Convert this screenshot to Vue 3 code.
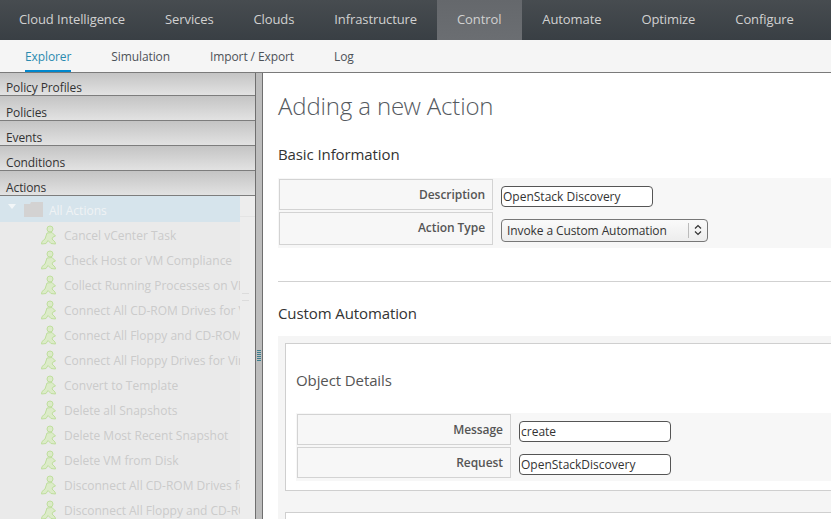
<template>
  <div class="page">
    <nav class="topnav">
      <a
        v-for="item in mainMenu"
        :key="item"
        class="topnav-item"
        :class="{ active: item === 'Control' }"
      >{{ item }}</a>
    </nav>
    <nav class="subnav">
      <a
        v-for="item in subMenu"
        :key="item"
        class="subnav-item"
        :class="{ active: item === 'Explorer' }"
      >{{ item }}</a>
    </nav>

    <div class="workspace">
      <aside class="sidebar">
        <div v-for="head in accordion" :key="head" class="accordion-head">{{ head }}</div>
        <div class="tree-wrap">
          <div class="tree">
            <div class="tree-root">
              <span class="caret"></span>
              <svg class="folder" width="19" height="15" viewBox="0 0 19 15">
                <path d="M0 2 H6 L7 0 H19 V15 H0 Z" fill="#d3d2d2" />
              </svg>
              <span class="root-label">All Actions</span>
            </div>
            <div v-for="action in actions" :key="action" class="tree-row">
              <svg class="runner" width="18" height="20" viewBox="0 0 18 20">
                <circle cx="10" cy="4" r="3" fill="#dcebc9" stroke="#bfdf9d" />
                <path
                  d="M7 8 L12 7.5 L15.5 11 L13 12 L12 14 L15 17 L15.5 19 L11 18.5 L8 15.5 L6 18.5 L1.5 19 L2 16.5 L5 14 Z"
                  fill="#dcebc9"
                  stroke="#bfdf9d"
                  stroke-width="1"
                />
              </svg>
              <span class="row-label">{{ action }}</span>
            </div>
          </div>
          <div class="tree-scroll">
            <span class="scroll-cap"></span>
            <span class="scroll-grip"></span>
          </div>
        </div>
      </aside>

      <div class="splitter">
        <span class="splitter-grip"></span>
      </div>

      <main class="content">
        <h1 class="title">Adding a new Action</h1>

        <h3 class="section">Basic Information</h3>
        <div class="form-table">
          <div class="form-row">
            <label class="form-label">Description</label>
            <div class="form-value">
              <input class="field" type="text" value="OpenStack Discovery" />
            </div>
          </div>
          <div class="form-row tall">
            <label class="form-label">Action Type</label>
            <div class="form-value">
              <div class="select">
                <span class="select-text">Invoke a Custom Automation</span>
                <span class="select-arrows">
                  <svg width="8" height="12" viewBox="0 0 8 12">
                    <path d="M1 4.5 L4 1.5 L7 4.5 M1 7.5 L4 10.5 L7 7.5" fill="none" stroke="#333" stroke-width="1.2" />
                  </svg>
                </span>
              </div>
            </div>
          </div>
        </div>

        <hr class="divider" />

        <h3 class="section custom">Custom Automation</h3>
        <div class="panel-bg">
          <div class="panel">
            <h3 class="panel-title">Object Details</h3>
            <div class="form-table">
              <div class="form-row">
                <label class="form-label">Message</label>
                <div class="form-value">
                  <input class="field" type="text" value="create" />
                </div>
              </div>
              <div class="form-row">
                <label class="form-label">Request</label>
                <div class="form-value">
                  <input class="field" type="text" value="OpenStackDiscovery" />
                </div>
              </div>
            </div>
          </div>
          <div class="panel next"></div>
        </div>
      </main>
    </div>
  </div>
</template>

<script setup>
const mainMenu = [
  'Cloud Intelligence',
  'Services',
  'Clouds',
  'Infrastructure',
  'Control',
  'Automate',
  'Optimize',
  'Configure'
]
const subMenu = ['Explorer', 'Simulation', 'Import / Export', 'Log']
const accordion = ['Policy Profiles', 'Policies', 'Events', 'Conditions', 'Actions']
const actions = [
  'Cancel vCenter Task',
  'Check Host or VM Compliance',
  'Collect Running Processes on VM Guest OS',
  'Connect All CD-ROM Drives for Virtual Machine',
  'Connect All Floppy and CD-ROM Drives for VM',
  'Connect All Floppy Drives for Virtual Machine',
  'Convert to Template',
  'Delete all Snapshots',
  'Delete Most Recent Snapshot',
  'Delete VM from Disk',
  'Disconnect All CD-ROM Drives for Virtual Machine',
  'Disconnect All Floppy and CD-ROM Drives for VM'
]
</script>

<style>
html, body {
  margin: 0;
  height: 519px;
  overflow: hidden;
  background: #fff;
}
</style>

<style scoped>
.page {
  width: 831px;
  height: 519px;
  overflow: hidden;
  font-family: "Open Sans", sans-serif;
  font-size: 12px;
  color: #363636;
}

.topnav {
  display: flex;
  height: 40px;
  background: linear-gradient(#474c50, #393f44);
  box-sizing: border-box;
}

.topnav-item {
  padding: 0 20px 0 19px;
  margin-right: 1px;
  line-height: 39px;
  font-size: 13px;
  letter-spacing: -0.1px;
  white-space: nowrap;
  color: #d1d1d1;
}

.topnav-item.active {
  margin-left: -1px;
  padding: 0 21px 0 20px;
  background: linear-gradient(#65686c, #6b6e72);
}

.subnav {
  display: flex;
  height: 33px;
  box-sizing: border-box;
  padding-left: 25px;
  gap: 40px;
  background: #f5f5f5;
  border-bottom: 1px solid #7a7a7a;
}

.subnav-item {
  height: 32px;
  box-sizing: border-box;
  line-height: 34px;
  font-size: 12px;
  letter-spacing: -0.1px;
  white-space: nowrap;
  color: #4d5258;
}

.subnav-item.active {
  color: #2b8bb0;
  border-bottom: 2px solid #0088ce;
}

.workspace {
  display: flex;
  height: 446px;
}

.sidebar {
  width: 255px;
  flex: none;
  overflow: hidden;
}

.accordion-head {
  height: 25px;
  box-sizing: border-box;
  padding: 8px 0 0 6px;
  line-height: 17px;
  font-size: 12px;
  letter-spacing: -0.1px;
  color: #333;
  background: linear-gradient(#c4c4c4, #e2e2e2);
  border-bottom: 1px solid #7d7d7d;
}

.accordion-head:first-child {
  height: 23px;
  padding-top: 6px;
}

.tree-wrap {
  display: flex;
  height: 330px;
  background: #eaeaea;
}

.tree {
  width: 240px;
  flex: none;
  overflow: hidden;
  color: #cbcbcb;
}

.tree-root {
  display: flex;
  align-items: center;
  height: 26px;
  background: #d6e4ec;
  white-space: nowrap;
}

.caret {
  width: 0;
  height: 0;
  margin-left: 8px;
  margin-bottom: 5px;
  border-left: 4px solid transparent;
  border-right: 4px solid transparent;
  border-top: 5px solid #f2f6f8;
}

.folder {
  margin-left: 8px;
}

.root-label {
  margin-left: 6px;
  padding-top: 2px;
  color: #f0f3f5;
}

.tree-row {
  display: flex;
  align-items: center;
  height: 25px;
  padding-left: 40px;
  white-space: nowrap;
}

.runner {
  flex: none;
}

.row-label {
  margin-left: 6px;
  padding-top: 2px;
}

.tree-scroll {
  position: relative;
  flex: 1;
  background: #ededed;
}

.scroll-cap {
  display: block;
  height: 20px;
  border-bottom: 1px solid #e4e4e4;
}

.scroll-grip {
  position: absolute;
  top: 97px;
  left: 2px;
  width: 7px;
  height: 6px;
  border-top: 1px solid #dcdcdc;
  border-bottom: 1px solid #dcdcdc;
}

.splitter {
  position: relative;
  width: 6px;
  flex: none;
  background: #bdbdbd;
  border-left: 1px solid #6f6f6f;
  border-right: 1px solid #6f6f6f;
}

.splitter-grip {
  position: absolute;
  top: 277px;
  left: 1px;
  width: 4px;
  height: 12px;
  background: repeating-linear-gradient(#3e7f8f 0 1px, transparent 1px 2px);
}

.content {
  flex: 1;
  min-width: 0;
  padding-left: 15px;
  overflow: hidden;
}

.title {
  margin: 16px 0 0;
  font-family: "Open Sans Light", "Open Sans", sans-serif;
  font-size: 24px;
  line-height: 33px;
  font-weight: 300;
  letter-spacing: -0.15px;
  color: #555a5f;
}

.section {
  margin: 22px 0 0;
  font-size: 15px;
  line-height: 20px;
  font-weight: 400;
  letter-spacing: -0.1px;
  color: #333;
}

.section.custom {
  margin-top: 21px;
}

.form-table {
  margin-top: 14px;
  background: #f7f7f7;
  padding: 1px 0 1px 1px;
}

.form-row {
  display: flex;
  height: 33px;
}

.form-row.tall {
  height: 35px;
}

.form-label {
  width: 214px;
  box-sizing: border-box;
  flex: none;
  border: 1px solid #d3d3d3;
  padding-right: 7px;
  text-align: right;
  line-height: 29px;
  font-weight: 600;
  font-size: 12px;
  letter-spacing: -0.05px;
  color: #555;
  margin-bottom: 2px;
}

.form-value {
  padding: 7px 0 0 8px;
}

.field {
  display: block;
  width: 152px;
  height: 21px;
  box-sizing: border-box;
  padding: 0 1px;
  border: 1px solid #555;
  border-radius: 4px;
  background: #fff;
  font-family: inherit;
  font-size: 12px;
  color: #333;
}

.select {
  display: flex;
  align-items: center;
  width: 207px;
  height: 23px;
  box-sizing: border-box;
  padding-bottom: 1px;
  border: 1px solid #777;
  border-radius: 4px;
  background: linear-gradient(#fafafa, #ededed);
  font-size: 12px;
  letter-spacing: -0.1px;
  color: #333;
}

.select-text {
  flex: 1;
  padding-left: 5px;
}

.select-arrows {
  display: flex;
  align-items: center;
  justify-content: center;
  width: 18px;
  height: 15px;
  border-left: 1px solid #bbb;
}

.divider {
  margin: 33px 0 0;
  border: 0;
  border-top: 1px solid #d1d1d1;
}

.panel-bg {
  margin-top: 13px;
  padding: 7px 0 0 7px;
  background: #f5f5f5;
  height: 200px;
}

.panel {
  height: 148px;
  box-sizing: border-box;
  padding: 0 0 0 10px;
  background: #fff;
  border: 1px solid #cfcfcf;
  border-right: 0;
}

.panel.next {
  margin-top: 21px;
}

.panel-title {
  margin: 26px 0 0;
  font-size: 15px;
  line-height: 20px;
  font-weight: 400;
  letter-spacing: -0.1px;
  color: #555;
}

.panel .form-table {
  margin-top: 23px;
}
</style>
